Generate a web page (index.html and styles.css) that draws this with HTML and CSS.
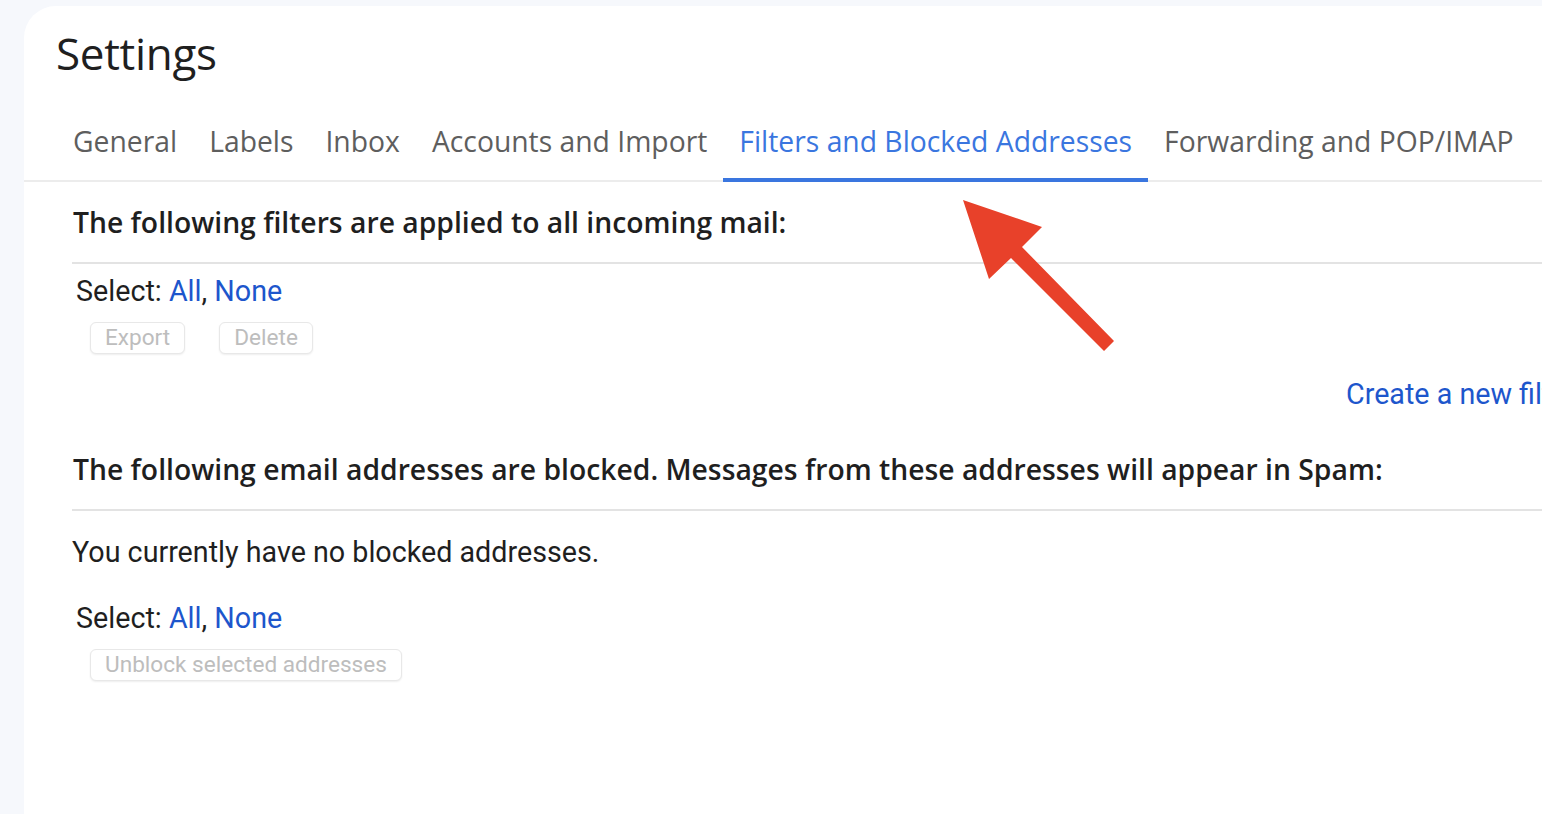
FILE: index.html
```html
<!DOCTYPE html>
<html>
<head>
<meta charset="utf-8">
<link rel="stylesheet" href="styles.css">
</head>
<body>
<div class="panel">
  <h1 class="title">Settings</h1>
  <nav class="tabs">
    <div class="tab">General</div>
    <div class="tab">Labels</div>
    <div class="tab">Inbox</div>
    <div class="tab">Accounts and Import</div>
    <div class="tab active">Filters and Blocked Addresses</div>
    <div class="tab">Forwarding and POP/IMAP</div>
  </nav>
  <div class="content">
    <h2 class="section-head">The following filters are applied to all incoming mail:</h2>
    <div class="select">Select: <a class="link">All</a>, <a class="link">None</a></div>
    <div class="buttons">
      <button class="btn">Export</button>
      <button class="btn">Delete</button>
    </div>
    <div class="create-row"><a class="link">Create a new filter</a></div>
    <h2 class="section-head second">The following email addresses are blocked. Messages from these addresses will appear in Spam:</h2>
    <p class="note">You currently have no blocked addresses.</p>
    <div class="select select2">Select: <a class="link">All</a>, <a class="link">None</a></div>
    <div class="buttons">
      <button class="btn">Unblock selected addresses</button>
    </div>
  </div>
</div>
<svg class="arrow" width="1542" height="814" viewBox="0 0 1542 814">
  <polygon points="963,200 1042,227 1022,247 1114,341 1104,351 1011,258 989,279" fill="#e8412a"/>
</svg>
</body>
</html>
```

FILE: styles.css
```css
html, body {
  margin: 0;
  padding: 0;
}
body {
  background: #f6f8fc;
  font-family: Roboto, "Noto Sans", Arial, sans-serif;
  color: #1f1f1f;
  overflow: hidden;
  width: 1542px;
  height: 814px;
  position: relative;
}
.panel {
  margin: 6px 0 0 24px;
  width: 1700px;
  height: 820px;
  background: #ffffff;
  border-top-left-radius: 32px;
}
.title {
  margin: 0;
  padding: 21px 0 0 32px;
  font-family: "Open Sans", Roboto, sans-serif;
  font-weight: 400;
  font-size: 44px;
  line-height: 52px;
  color: #1f1f1f;
  letter-spacing: -0.3px;
}
.tabs {
  display: flex;
  margin-top: 42px;
  padding-left: 33px;
  border-bottom: 2px solid #ececec;
  white-space: nowrap;
}
.tab {
  padding: 2px 16px 0;
  font-family: "Open Sans", Roboto, sans-serif;
  font-size: 28.3px;
  line-height: 36px;
  height: 61px;
  color: #5e5e5e;
  border-bottom: 4px solid transparent;
  margin-bottom: -2px;
  box-sizing: border-box;
}
.tab.active {
  color: #3a76df;
  border-bottom-color: #3a76df;
}
.content {
  padding-left: 48px;
}
.section-head {
  margin: 0;
  padding: 20px 0 20px 1px;
  font-family: "Open Sans", Roboto, sans-serif;
  font-size: 28.3px;
  font-weight: 600;
  line-height: 40px;
  color: #1f1f1f;
  border-bottom: 2px solid #e3e3e3;
  white-space: nowrap;
}
.section-head.second {
  margin-top: 17px;
}
.select {
  margin: 7px 0 0 4px;
  font-size: 28.7px;
  line-height: 40px;
  color: #1f1f1f;
}
.select.select2 {
  margin-top: 26px;
}
.link {
  color: #1d56cc;
  cursor: pointer;
}
.buttons {
  display: flex;
  gap: 34px;
  margin: 11px 0 0 18px;
}
.btn {
  font-family: Roboto, sans-serif;
  font-size: 22.6px;
  line-height: 28px;
  height: 32px;
  box-sizing: border-box;
  color: #bdbdbd;
  background: #fff;
  border: 1px solid #e8e8e8;
  border-radius: 6px;
  padding: 1px 14px;
  box-shadow: 0 1px 2px rgba(0,0,0,0.07);
}
.create-row {
  margin: 22px 0 0 1274px;
  font-size: 28.7px;
  line-height: 36px;
  white-space: nowrap;
}
.note {
  margin: 21px 0 0 0;
  font-size: 28.7px;
  line-height: 40px;
  color: #1f1f1f;
}
.arrow {
  position: absolute;
  left: 0;
  top: 0;
  pointer-events: none;
}
```
